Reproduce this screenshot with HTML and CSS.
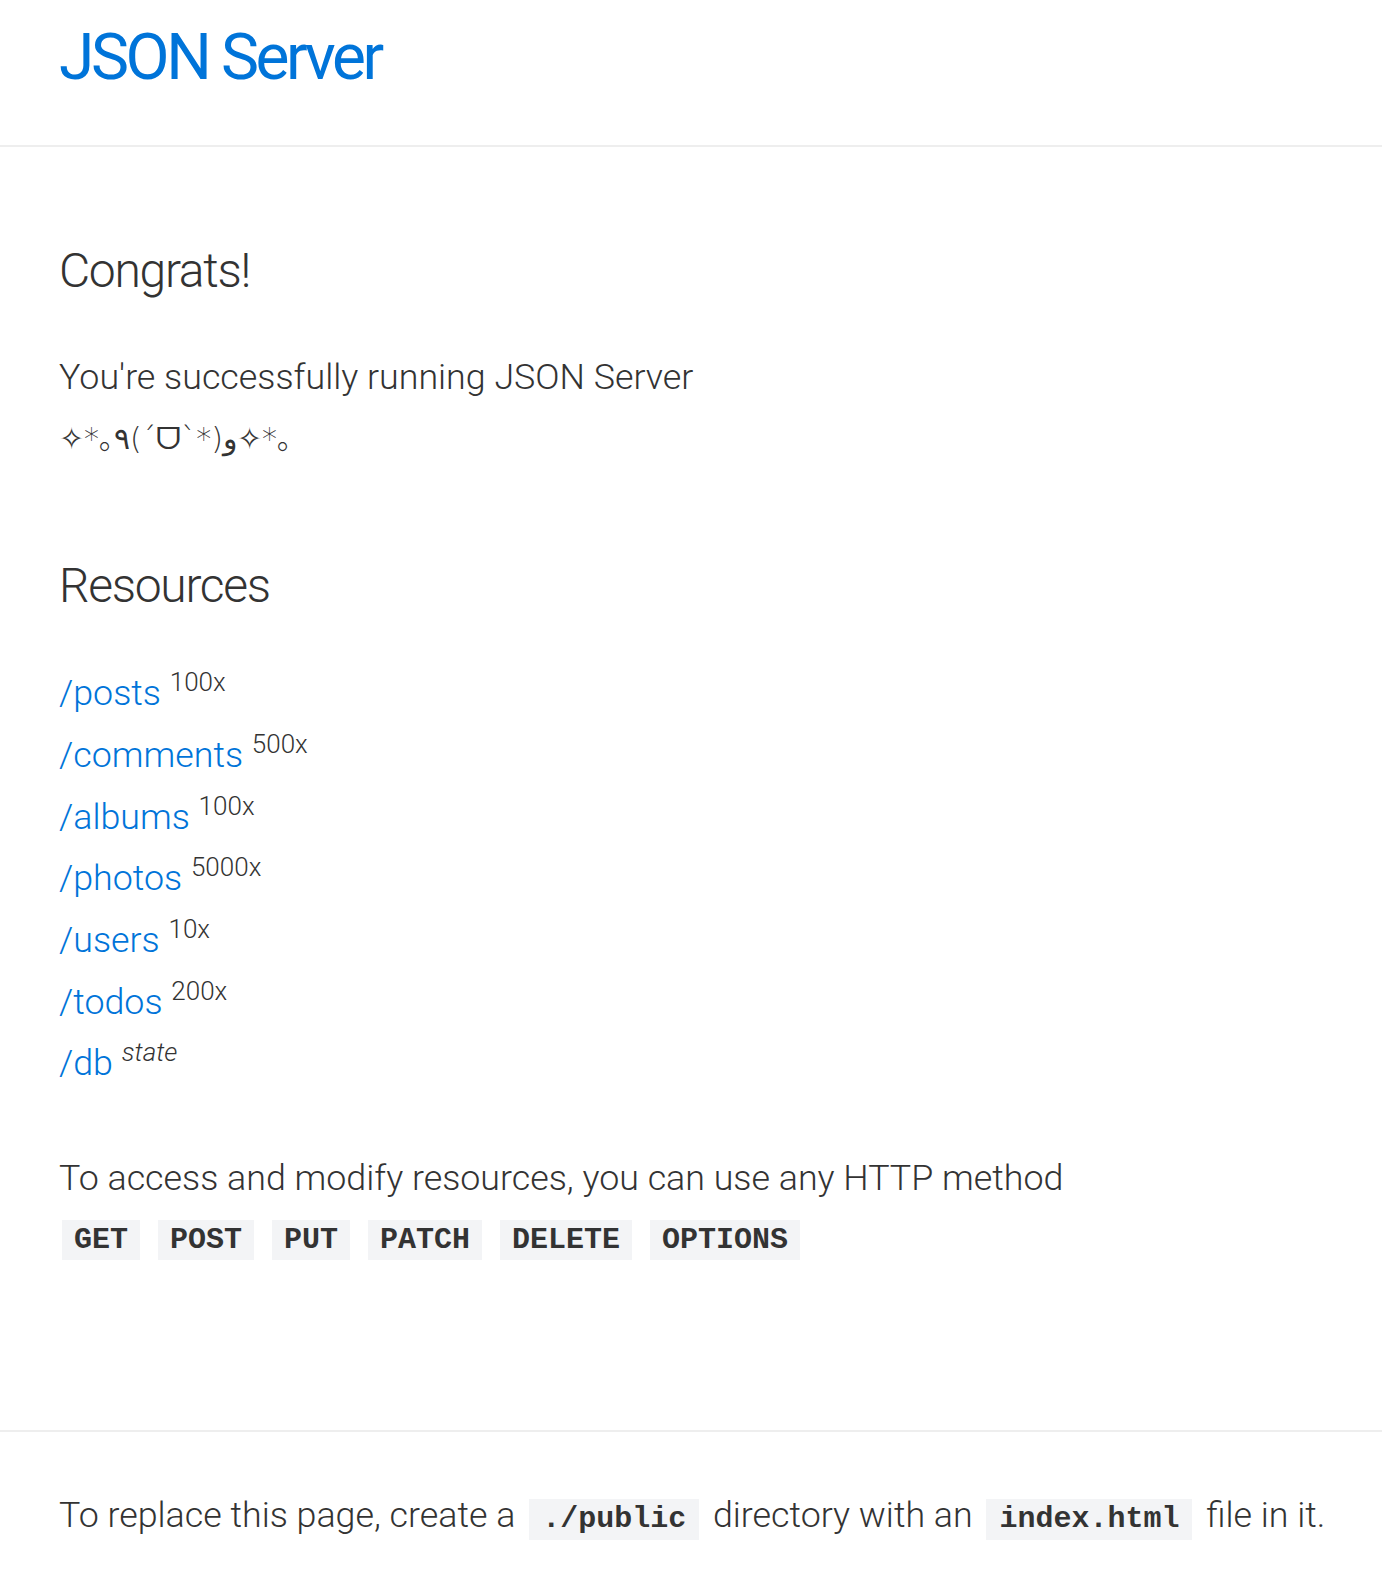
FILE: index.html
```html
<!DOCTYPE html>
<html lang="en">
<head>
<meta charset="utf-8">
<title>JSON Server</title>
<link rel="stylesheet" href="styles.css">
</head>
<body>
<header class="site-header">
  <div class="container">
    <a class="logo" href="#">JSON Server</a>
  </div>
</header>
<main class="main">
  <div class="container">
    <h1 class="title">Congrats!</h1>
    <p class="lead">You're successfully running JSON Server<br><span class="kaomoji">✧*｡٩(ˊᗜˋ*)و✧*｡</span></p>

    <h1 class="title title-resources">Resources</h1>
    <ul class="resources">
      <li><a href="#">/posts</a> <sup>100x</sup></li>
      <li><a href="#">/comments</a> <sup>500x</sup></li>
      <li><a href="#">/albums</a> <sup>100x</sup></li>
      <li><a href="#">/photos</a> <sup>5000x</sup></li>
      <li><a href="#">/users</a> <sup>10x</sup></li>
      <li><a href="#">/todos</a> <sup>200x</sup></li>
      <li><a href="#">/db</a> <sup><em>state</em></sup></li>
    </ul>

    <p class="access">To access and modify resources, you can use any HTTP method</p>
    <p class="methods"><code>GET</code> <code>POST</code> <code>PUT</code> <code>PATCH</code> <code>DELETE</code> <code>OPTIONS</code></p>
  </div>
</main>
<footer class="site-footer">
  <div class="container">
    <p class="replace">To replace this page, create a <code>./public</code> directory with an <code>index.html</code> file in it.</p>
  </div>
</footer>
</body>
</html>
```

FILE: styles.css
```css
html, body {
  margin: 0;
  padding: 0;
}

body {
  display: flex;
  flex-direction: column;
  min-height: 100vh;
  background: #fff;
  color: #333;
  font-family: Roboto, "Noto Sans", "DejaVu Sans", sans-serif;
  font-weight: 300;
  font-size: 35.8px;
}

a {
  color: #0074d9;
  text-decoration: none;
}

.container {
  padding: 0 59px;
}

.site-header {
  border-bottom: 2px solid #eee;
  height: 145px;
  flex: none;
}

.logo {
  display: block;
  font-weight: 400;
  font-size: 64px;
  line-height: 1;
  padding-top: 26px;
  letter-spacing: -3.4px;
}

.main {
  flex: 1;
}

.title {
  margin: 0;
  font-weight: 300;
  font-size: 48px;
  line-height: 57.6px;
  letter-spacing: -1.3px;
  padding-top: 95px;
}

.title-resources {
  padding-top: 88px;
}

.lead {
  margin: 47px 0 0;
  line-height: 60px;
}

.kaomoji {
  font-family: "DejaVu Sans", "Noto Sans", "Noto Sans CJK JP", sans-serif;
  font-size: 30px;
}

.resources {
  list-style: none;
  margin: 49px 0 0;
  padding: 0;
  line-height: 61.7px;
}

.resources sup {
  font-size: 26px;
  line-height: 0;
  vertical-align: 14px;
}

.access {
  margin: 53px 0 0;
  line-height: 60px;
}

.methods {
  display: flex;
  gap: 18px;
  margin: 12px 0 0 3px;
}

code {
  display: inline-block;
  font-family: "Liberation Mono", "Courier New", monospace;
  font-weight: 700;
  font-size: 30px;
  line-height: 40px;
  padding: 0 12px;
  background: #f3f4f6;
  color: #333;
}

.replace code {
  line-height: 41px;
  padding: 0 13px;
  margin: 0 5px;
}

.site-footer {
  border-top: 2px solid #eee;
  height: 140px;
  flex: none;
}

.replace {
  margin: 0;
  padding-top: 53px;
  line-height: 60px;
  white-space: nowrap;
}
```
